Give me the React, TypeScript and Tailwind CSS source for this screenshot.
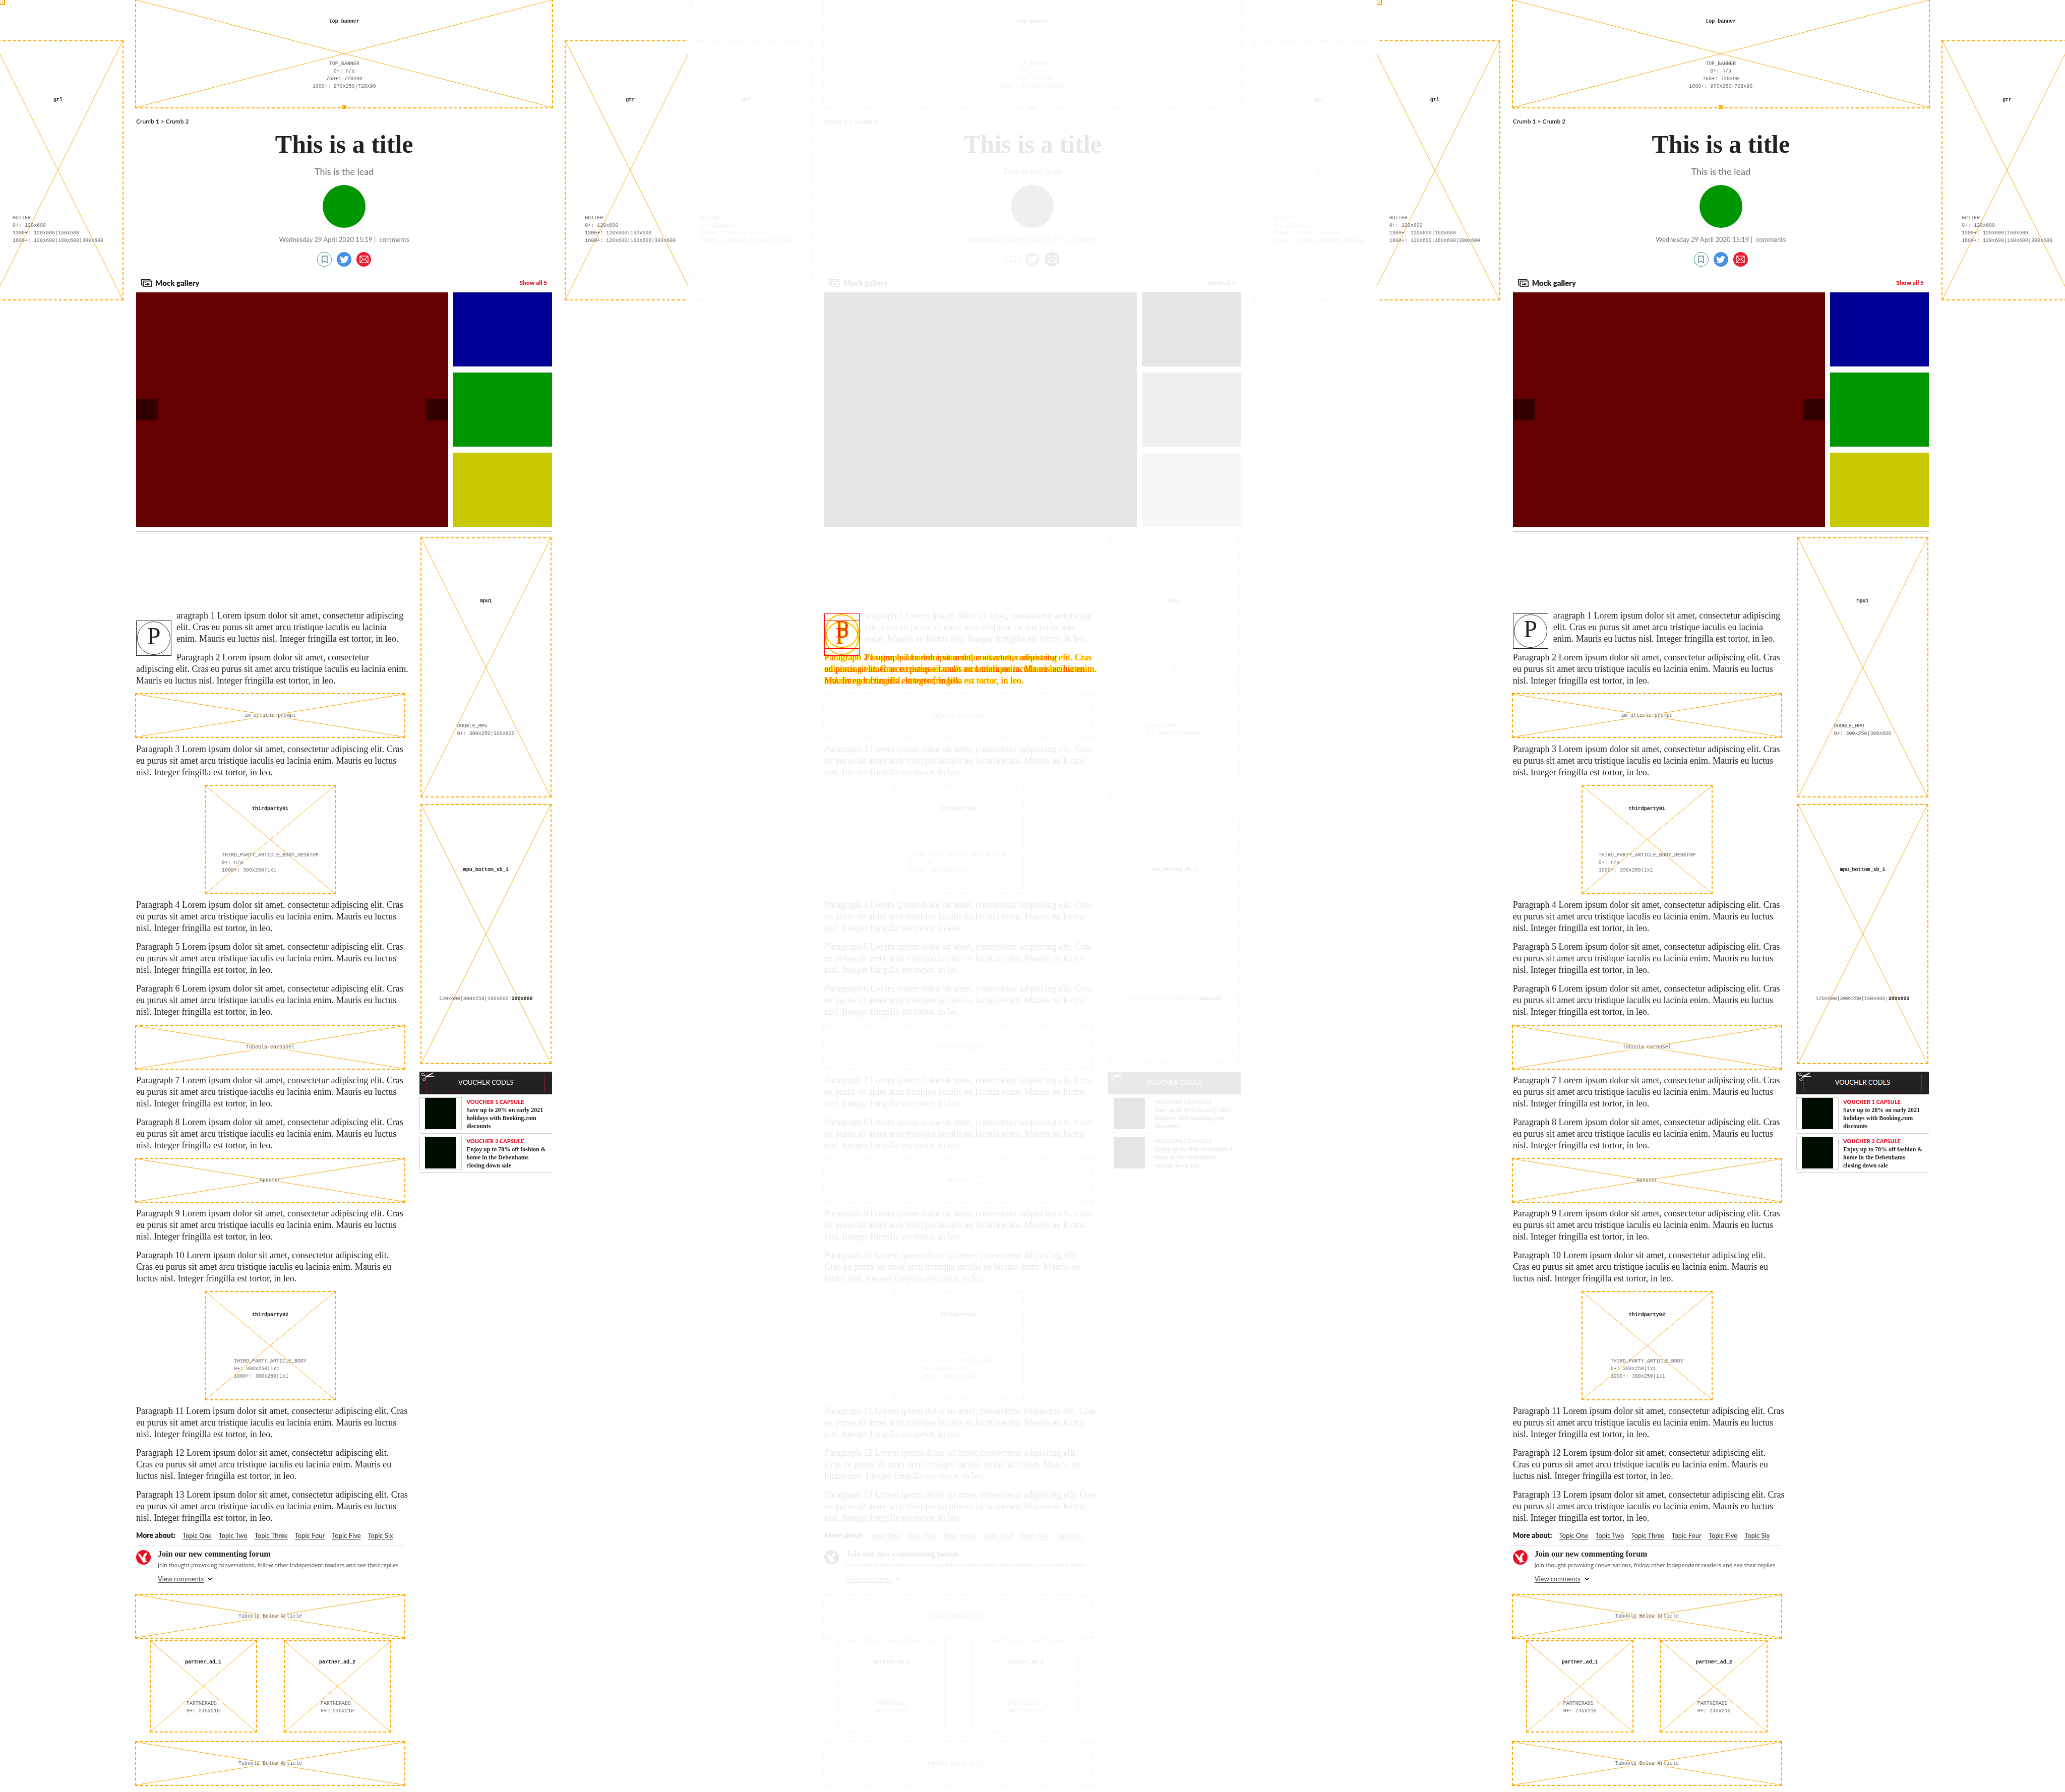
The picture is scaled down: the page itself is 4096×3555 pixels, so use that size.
import React from "react";
import { FaTwitter } from "react-icons/fa";

type Variant = "before" | "diff" | "after";

function paragraphLines(n: number, wide: boolean): string[] {
  const start = `Paragraph ${n} Lorem ipsum dolor sit amet, consectetur adipiscing elit.`;
  return wide
    ? [
        start,
        "Cras eu purus sit amet arcu tristique iaculis eu lacinia enim. Mauris eu",
        "luctus nisl. Integer fringilla est tortor, in leo.",
      ]
    : [
        start + " Cras",
        "eu purus sit amet arcu tristique iaculis eu lacinia enim. Mauris eu luctus",
        "nisl. Integer fringilla est tortor, in leo.",
      ];
}

const FIRST_LINES = [
  "aragraph 1 Lorem ipsum dolor sit amet, consectetur adipiscing",
  "elit. Cras eu purus sit amet arcu tristique iaculis eu lacinia",
  "enim. Mauris eu luctus nisl. Integer fringilla est tortor, in leo.",
];

const INDENTED_LINES = [
  "Paragraph 2 Lorem ipsum dolor sit amet, consectetur",
  "adipiscing elit. Cras eu purus sit amet arcu tristique iaculis eu lacinia enim.",
  "Mauris eu luctus nisl. Integer fringilla est tortor, in leo.",
];

function Lines({ lines, className = "" }: { lines: string[]; className?: string }) {
  return (
    <p className={`whitespace-nowrap text-lg/[23px] ${className}`}>
      {lines.map((line, i) => (
        <React.Fragment key={i}>
          {i > 0 && <br />}
          {line}
        </React.Fragment>
      ))}
    </p>
  );
}

function Paragraphs({ items }: { items: number[] }) {
  return (
    <div className="flex flex-col gap-[14px]">
      {items.map((n) => (
        <Lines key={n} lines={paragraphLines(n, n === 10 || n === 12)} />
      ))}
    </div>
  );
}

function Cross() {
  return (
    <svg
      className="absolute inset-0 size-full"
      viewBox="0 0 100 100"
      preserveAspectRatio="none"
      stroke="#ffa500"
      strokeWidth="1"
      aria-hidden="true"
    >
      <line x1="0" y1="0" x2="100" y2="100" vectorEffect="non-scaling-stroke" />
      <line x1="100" y1="0" x2="0" y2="100" vectorEffect="non-scaling-stroke" />
    </svg>
  );
}

function AdSlot({
  name,
  meta,
  className,
  center = false,
}: {
  name: string;
  meta: React.ReactNode[];
  className: string;
  center?: boolean;
}) {
  return (
    <div
      className={`relative flex shrink-0 flex-col items-center justify-around font-['Liberation_Mono'] text-[10px]/[15px] outline-2 outline-dashed outline-[#ffa500] ${className}`}
    >
      <Cross />
      <strong className="relative">{name}</strong>
      <div className={`relative whitespace-nowrap text-[#666] ${center ? "text-center" : ""}`}>
        {meta.map((line, i) => (
          <div key={i}>{line}</div>
        ))}
      </div>
    </div>
  );
}

function WideSlot({ name }: { name: string }) {
  return (
    <div className="relative flex h-[85px] items-center justify-center font-['Liberation_Mono'] text-[10px]/[12px] text-[#666] outline-2 outline-dashed outline-[#ffa500]">
      <Cross />
      <span className="relative bg-white/50">{name}</span>
    </div>
  );
}

function Gutter({ name, className }: { name: string; className: string }) {
  return (
    <AdSlot
      name={name}
      className={`mt-[82px] h-[512px] w-64 ${className}`}
      meta={["GUTTER", "0+: 120x600", "1300+: 120x600|160x600", "1600+: 120x600|160x600|300x600"]}
    />
  );
}

function ShareIcons() {
  return (
    <div className="mt-[15px] flex gap-[10px]">
      <button
        aria-label="Bookmark"
        className="flex size-[29px] items-center justify-center rounded-full border border-[#2f8080]"
      >
        <svg width="12" height="15" viewBox="0 0 12 15" fill="none" stroke="#2f8080" strokeWidth="1.3" aria-hidden="true">
          <path d="M1 1h10v13L6 11l-5 3z" />
        </svg>
      </button>
      <button
        aria-label="Share on Twitter"
        className="flex size-[29px] items-center justify-center rounded-full bg-[#4a90e2] text-white"
      >
        <FaTwitter size={18} />
      </button>
      <button
        aria-label="Share by email"
        className="flex size-[29px] items-center justify-center rounded-full bg-[#ec1a2e]"
      >
        <svg width="18" height="15" viewBox="0 0 18 15" fill="none" stroke="#fff" strokeWidth="1.2" aria-hidden="true">
          <rect x="1" y="1" width="16" height="13" />
          <path d="M1 1l8 8 8-8M1 14l6-6.500M17 14l-6-6.500" />
        </svg>
      </button>
    </div>
  );
}

function Gallery() {
  return (
    <section>
      <div className="mt-[14px] flex h-[37px] items-center border-t border-[#bbb] px-[10px] pb-[3px]">
        <svg width="21" height="16" viewBox="0 0 24 18" aria-hidden="true">
          <path d="M4 14H1V1h19v3" fill="none" stroke="#222" strokeWidth="2" />
          <rect x="5" y="5" width="18" height="12" fill="#fff" stroke="#222" strokeWidth="2" />
          <rect x="9" y="8" width="2" height="2" fill="#222" />
          <path d="M9 14v-1l2-2 1 1 3-3 1 2 1-1 2 3v1z" fill="#222" />
        </svg>
        <h2 className="ml-[7px] text-[15px]/5 font-extrabold">Mock gallery</h2>
        <a href="#gallery" className="ml-auto text-[12px]/5 font-extrabold text-[#ec1a2e]">
          Show all 5
        </a>
      </div>
      <div className="grid h-[465px] grid-cols-[1fr_196px] gap-[10px]">
        <div className="flex items-center justify-between bg-[#640000]">
          <button aria-label="Previous" className="size-[43px] bg-black/50" />
          <button aria-label="Next" className="size-[43px] bg-black/50" />
        </div>
        <div className="grid grid-rows-3 gap-3">
          <div className="bg-[#000096]" />
          <div className="bg-[#009600]" />
          <div className="bg-[#c8c800]" />
        </div>
      </div>
      <div className="mt-[9px] border-t border-[#ccc]" />
    </section>
  );
}

function Header() {
  return (
    <header className="flex flex-col">
      <div className="relative">
        <AdSlot
          name="top_banner"
          center
          className="h-[213px]"
          meta={["TOP_BANNER", "0+: n/a", "768+: 728x90", "1000+: 970x250|728x90"]}
        />
        <div className="absolute -bottom-px left-1/2 size-1 -translate-x-1/2 outline-2 outline-[#ffa500]">
          <Cross />
        </div>
      </div>
      <nav className="mt-[18px] text-[12px]/5 font-semibold">
        <a href="#crumb-1">Crumb 1</a> &gt; <a href="#crumb-2">Crumb 2</a>
      </nav>
      <div className="flex flex-col items-center">
        <h1 className="mt-[5px] font-['Liberation_Serif'] text-[50px]/[60px] font-bold">This is a title</h1>
        <p className="mt-3 text-[18px]/6 text-[#6b6b6b]">This is the lead</p>
        <div className="mt-[15px] size-[85px] rounded-full bg-[#009600]" />
        <p className="mt-[13px] text-[13px]/5 text-[#767676]">
          Wednesday 29 April 2020 15:19 |<span className="ml-1"> comments</span>
        </p>
        <ShareIcons />
      </div>
    </header>
  );
}

function CapBox({ className = "", diff = false }: { className?: string; diff?: boolean }) {
  return (
    <div
      className={`size-[70px] border p-px font-['Liberation_Serif'] text-[48px]/[56px] ${
        diff ? "border-[#f00] text-[#f40] [text-shadow:1px_0_#ff0,-1px_0_#ff0]" : "border-[#222]"
      } ${className}`}
    >
      <div
        className={`size-full rounded-full border text-center ${
          diff ? "border-[#f60] shadow-[0_0_0_1px_#ff0,inset_0_0_0_1px_#ff0]" : "border-[#222]"
        }`}
      >
        P
      </div>
    </div>
  );
}

function Opening({ variant }: { variant: Variant }) {
  if (variant === "diff") {
    return (
      <div className="flow-root">
        <div className="relative float-left mt-[7px] mr-[10px] h-[76px] w-[70px]">
          <CapBox diff className="mix-blend-multiply" />
          <CapBox diff className="absolute top-[14px] left-0 mix-blend-multiply" />
        </div>
        <Lines lines={FIRST_LINES} className="opacity-10 grayscale" />
        <div className="relative mt-[14px] h-[69px] text-[#ff7000] [text-shadow:1px_0_#ff0,-1px_0_#ff0]">
          <Lines lines={paragraphLines(2, false)} className="absolute top-0 left-0 mix-blend-multiply" />
          <Lines lines={INDENTED_LINES} className="absolute top-0 left-0 indent-20 mix-blend-multiply" />
        </div>
      </div>
    );
  }
  const before = variant === "before";
  return (
    <div className="flow-root">
      <CapBox className={`float-left mr-[10px] ${before ? "mt-[21px]" : "mt-[7px]"}`} />
      <Lines lines={FIRST_LINES} />
      <Lines lines={before ? INDENTED_LINES : paragraphLines(2, false)} className="mt-[14px]" />
    </div>
  );
}

const TOPICS = ["One", "Two", "Three", "Four", "Five", "Six"];

function Eagle() {
  return (
    <svg className="size-[29px] shrink-0" viewBox="0 0 34 34" aria-hidden="true">
      <circle cx="17" cy="17" r="17" fill="#e60f23" />
      <path
        d="M4 8l3 1 2 1 3 3 3 4 1 1 1-5 2-4 3-2 4-1-1 2 1 1-2 1 1 1-2 1 0 2-2 1 1 1-3 2 3 1 2 2-1 1-2-1 1 3 2 2 4 1-3 1-4 0-2 1-4 0 2-2-3 0 2-2-3-1-2-2 2 0-3-2 1-1-2-1 1-1-2-1 0-1-2-2z"
        fill="#fff"
      />
    </svg>
  );
}

function ArticleRest() {
  return (
    <>
      <WideSlot name="im article prompt" />
      <div className="mt-[13px]">
        <Paragraphs items={[3]} />
      </div>
      <AdSlot
        name="thirdparty01"
        className="mx-auto mt-[15px] mb-3 h-[213px] w-64"
        meta={["THIRD_PARTY_ARTICLE_BODY_DESKTOP", "0+: n/a", "1000+: 300x250|1x1"]}
      />
      <Paragraphs items={[4, 5, 6]} />
      <div className="mt-4 mb-3">
        <WideSlot name="Taboola Carousel" />
      </div>
      <Paragraphs items={[7, 8]} />
      <div className="mt-[15px] mb-3">
        <WideSlot name="Apester" />
      </div>
      <Paragraphs items={[9, 10]} />
      <AdSlot
        name="thirdparty02"
        className="mx-auto mt-[15px] mb-3 h-[213px] w-64"
        meta={["THIRD_PARTY_ARTICLE_BODY", "0+: 300x250|1x1", "1000+: 300x250|1x1"]}
      />
      <Paragraphs items={[11, 12, 13]} />

      <div className="mt-[13px] flex items-center gap-[14px] whitespace-nowrap pb-[10px] text-[13px]/5">
        <strong className="text-[14px]/5 font-extrabold">More about:</strong>
        {TOPICS.map((t) => (
          <a key={t} href={`#topic-${t.toLowerCase()}`} className="underline underline-offset-2">
            Topic {t}
          </a>
        ))}
      </div>

      <section className="mb-[17px] flex gap-[14px] border-y border-[#ddd] pt-2 pb-1">
        <Eagle />
        <div className="whitespace-nowrap text-[#444]">
          <h3 className="font-['Liberation_Serif'] text-[16px]/4 font-bold text-[#222]">
            Join our new commenting forum
          </h3>
          <div className="mt-[6px] font-['Open_Sans'] text-[11px]/4">
            Join thought-provoking conversations, follow other Independent readers and see their replies
          </div>
          <button className="mt-[9px] flex items-center text-[13px]/5">
            <span className="underline underline-offset-2">View comments</span>
            <svg className="ml-2" width="9" height="7" viewBox="0 0 9 7" fill="none" stroke="#000" strokeWidth="1.600" aria-hidden="true">
              <path d="M1 1.500l3.500 3.500 3.500-3.500" />
            </svg>
          </button>
        </div>
      </section>

      <WideSlot name="Taboola Below Article" />
      <div className="mt-[7px] mb-[21px] grid grid-cols-2 justify-items-center">
        <AdSlot name="partner_ad_1" className="h-[179px] w-[209px]" meta={["PARTNERADS", "0+: 245x210"]} />
        <AdSlot name="partner_ad_2" className="h-[179px] w-[209px]" meta={["PARTNERADS", "0+: 245x210"]} />
      </div>
      <WideSlot name="Taboola Below Article" />
    </>
  );
}

const VOUCHERS = [
  { capsule: "VOUCHER 1 CAPSULE", lines: ["Save up to 20% on early 2021", "holidays with Booking.com", "discounts"] },
  { capsule: "VOUCHER 2 CAPSULE", lines: ["Enjoy up to 70% off fashion &", "home in the Debenhams", "closing down sale"] },
];

function Aside() {
  return (
    <aside className="w-[263px] shrink-0">
      <AdSlot name="mpu1" className="mx-auto h-[512px] w-64" meta={["DOUBLE_MPU", "0+: 300x250|300x600"]} />
      <AdSlot
        name="mpu_bottom_sb_1"
        className="mx-auto mt-[17px] h-[512px] w-64"
        meta={[
          <span key="sizes">
            120x600|300x250|160x600|<b className="text-[#222]">300x600</b>
          </span>,
        ]}
      />
      <div className="relative mt-[17px] bg-[#222] px-[14px] pt-[6px] pb-[6px]">
        <div className="flex h-[33px] items-center justify-center border border-dashed border-[#ec1a2e] pb-1 text-[13px]/4 text-white">
          VOUCHER CODES
        </div>
        <svg
          className="absolute top-px left-[3px]"
          width="27"
          height="18"
          viewBox="0 0 31 21"
          fill="none"
          stroke="#fff"
          aria-hidden="true"
        >
          <ellipse cx="4" cy="5" rx="3.200" ry="2.800" transform="rotate(25 4 5)" />
          <ellipse cx="7" cy="17" rx="3" ry="3.300" transform="rotate(30 7 17)" />
          <path d="M7 7l5 3M9 14l3-4" strokeWidth="1.400" />
          <path d="M11 9L28 1l-1 2-14 8zM11 9l19 .5v1L12 11z" fill="#fff" strokeWidth="0.500" />
        </svg>
      </div>
      {VOUCHERS.map((v) => (
        <a key={v.capsule} href="#voucher" className="mt-[6px] flex gap-[9px] border-b border-[#ccc] pb-[6px]">
          <div className="flex h-[65px] w-[84px] shrink-0 justify-center border border-[#ccc]">
            <div className="size-[62px] bg-[#000d00]" />
          </div>
          <div className="whitespace-nowrap pt-px">
            <div className="text-[11px]/4 font-extrabold text-[#ec1a2e]">{v.capsule}</div>
            <div className="font-['Liberation_Serif'] text-[12px]/4 font-bold">
              {v.lines.map((l) => (
                <div key={l}>{l}</div>
              ))}
            </div>
          </div>
        </a>
      ))}
    </aside>
  );
}

function Page({ variant }: { variant: Variant }) {
  const ghost = variant === "diff" ? "opacity-10 grayscale" : "";
  return (
    <div className="relative flex min-w-0 gap-[27px] overflow-hidden pb-[14px]">
      <div className={`absolute top-0 left-0 size-2 outline-2 outline-dashed outline-[#ffa500] ${ghost}`}>
        <Cross />
      </div>
      <Gutter name="gtl" className={`-ml-[13px] ${ghost}`} />
      <div className="min-w-0 flex-1">
        <div className={ghost}>
          <Header />
          <Gallery />
        </div>
        <div className="mt-[13px] flex justify-between">
          <article className="w-[532px] pt-[142px] font-['Liberation_Serif']">
            <Opening variant={variant} />
            <div className={`mt-[15px] font-['Lato'] [&_p]:font-['Liberation_Serif'] ${ghost}`}>
              <ArticleRest />
            </div>
          </article>
          <div className={ghost}>
            <Aside />
          </div>
        </div>
      </div>
      <Gutter name="gtr" className={`-mr-[13px] ${ghost}`} />
    </div>
  );
}

export default function App() {
  return (
    <main className="grid min-h-screen grid-cols-3 bg-white font-['Lato'] text-[#222]">
      <Page variant="before" />
      <Page variant="diff" />
      <Page variant="after" />
    </main>
  );
}
